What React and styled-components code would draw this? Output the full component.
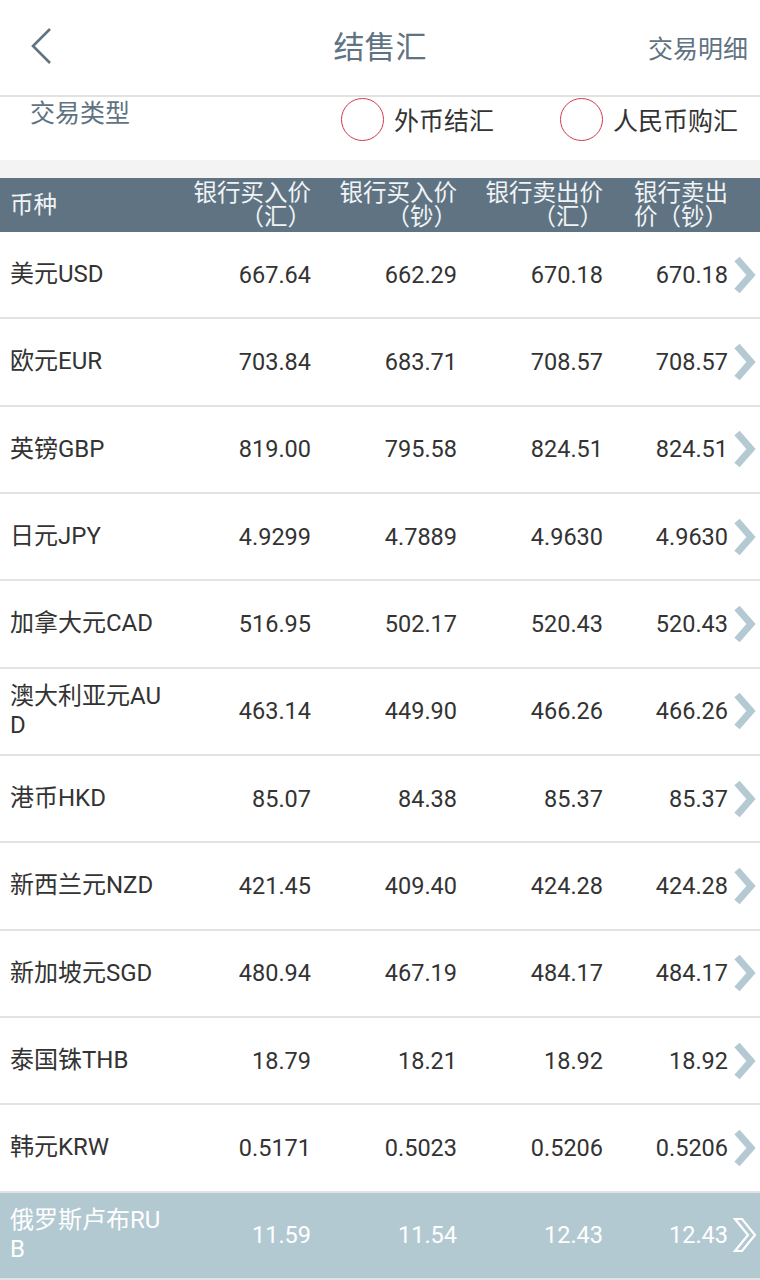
import React from 'react'
import styled, { createGlobalStyle } from 'styled-components'

const GlobalStyle = createGlobalStyle`
  html, body {
    margin: 0;
    padding: 0;
    background: #ffffff;
  }
  body {
    font-family: Roboto, "Noto Sans CJK SC", sans-serif;
  }
`;

const rates = [
  { name: '美元USD', v: ['667.64', '662.29', '670.18', '670.18'] },
  { name: '欧元EUR', v: ['703.84', '683.71', '708.57', '708.57'] },
  { name: '英镑GBP', v: ['819.00', '795.58', '824.51', '824.51'] },
  { name: '日元JPY', v: ['4.9299', '4.7889', '4.9630', '4.9630'] },
  { name: '加拿大元CAD', v: ['516.95', '502.17', '520.43', '520.43'] },
  { name: '澳大利亚元AUD', v: ['463.14', '449.90', '466.26', '466.26'] },
  { name: '港币HKD', v: ['85.07', '84.38', '85.37', '85.37'] },
  { name: '新西兰元NZD', v: ['421.45', '409.40', '424.28', '424.28'] },
  { name: '新加坡元SGD', v: ['480.94', '467.19', '484.17', '484.17'] },
  { name: '泰国铢THB', v: ['18.79', '18.21', '18.92', '18.92'] },
  { name: '韩元KRW', v: ['0.5171', '0.5023', '0.5206', '0.5206'] },
  { name: '俄罗斯卢布RUB', v: ['11.59', '11.54', '12.43', '12.43'], active: true },
];

export default function App() {
  return (
    <Page>
      <GlobalStyle />
      <TopBar>
        <BackButton>
          <svg width="24" height="40" viewBox="0 0 24 40">
            <polyline points="20,3 3,20 20,37" fill="none" stroke="#5f7383" strokeWidth="2.6" />
          </svg>
        </BackButton>
        <Title>结售汇</Title>
        <TopLink>交易明细</TopLink>
      </TopBar>

      <TypeRow>
        <TypeLabel>交易类型</TypeLabel>
        <Options>
          <Option>
            <Radio />
            <span>外币结汇</span>
          </Option>
          <Option>
            <Radio />
            <span>人民币购汇</span>
          </Option>
        </Options>
      </TypeRow>

      <Gap />

      <HeadRow>
        <HeadCell $left>币种</HeadCell>
        <HeadCell>银行买入价（汇）</HeadCell>
        <HeadCell>银行买入价（钞）</HeadCell>
        <HeadCell>银行卖出价（汇）</HeadCell>
        <HeadCell $narrow>银行卖出价（钞）</HeadCell>
        <span />
      </HeadRow>

      {rates.map((r) => (
        <Row key={r.name} $active={r.active}>
          <Name>{r.name}</Name>
          {r.v.map((x, i) => (
            <Num key={i}>{x}</Num>
          ))}
          <Arrow>
            {r.active ? (
              <svg width="26" height="38" viewBox="0 0 26 38">
                <polygon
                  points="3,3 10,3 23,19 10,35 3,35 16,19"
                  fill="none"
                  stroke="#ffffff"
                  strokeWidth="2.2"
                  strokeLinejoin="miter"
                />
              </svg>
            ) : (
              <svg width="26" height="38" viewBox="0 0 26 38">
                <polyline points="5,3 19,19 5,35" fill="none" stroke="#b4c9d2" strokeWidth="7" />
              </svg>
            )}
          </Arrow>
        </Row>
      ))}
    </Page>
  )
}

const Page = styled.div`
  width: 760px;
  height: 1280px;
  overflow: hidden;
  background: #ffffff;
`;

const TopBar = styled.div`
  height: 95px;
  display: grid;
  grid-template-columns: 1fr auto 1fr;
  align-items: center;
  border-bottom: 2px solid #e2e2e2;
  padding: 0 12px;
`;

const BackButton = styled.div`
  display: flex;
  align-items: center;
  padding: 0 0 4px 18px;
`;

const Title = styled.div`
  font-size: 31px;
  color: #5f7383;
  padding-bottom: 6px;
`;

const TopLink = styled.div`
  justify-self: end;
  font-size: 25px;
  color: #5f7383;
  padding-bottom: 2px;
`;

const TypeRow = styled.div`
  height: 63px;
  display: flex;
  justify-content: space-between;
  align-items: flex-start;
  padding: 0 22px 0 30px;
`;

const TypeLabel = styled.div`
  font-size: 25px;
  color: #5f7383;
  line-height: 34px;
`;

const Options = styled.div`
  display: flex;
  gap: 66px;
`;

const Option = styled.div`
  display: flex;
  align-items: center;
  gap: 10px;
  font-size: 25px;
  color: #333333;
  height: 44px;
`;

const Radio = styled.span`
  width: 43px;
  height: 43px;
  border-radius: 50%;
  border: 1.5px solid #d23a4e;
  box-sizing: border-box;
`;

const Gap = styled.div`
  height: 18px;
  background: #f3f3f3;
`;

const gridCols = `165px 146px 146px 146px 125px 32px`;

const HeadRow = styled.div`
  height: 54px;
  display: grid;
  grid-template-columns: ${gridCols};
  align-items: center;
  background: #5f7383;
  color: #f1f4f6;
  font-size: 23.5px;
  line-height: 24px;
`;

const HeadCell = styled.div`
  text-align: ${(p) => (p.$left ? 'left' : 'right')};
  padding-left: ${(p) => (p.$left ? '10px' : p.$narrow ? '24px' : '0')};
`;

const Row = styled.div`
  height: 87.33px;
  box-sizing: border-box;
  display: grid;
  grid-template-columns: ${gridCols};
  align-items: center;
  border-bottom: 2px solid #e3e3e3;
  background: ${(p) => (p.$active ? '#b3c9d2' : '#ffffff')};
  color: ${(p) => (p.$active ? '#ffffff' : '#333333')};
  font-size: 23.5px;
`;

const Name = styled.div`
  padding-left: 10px;
  font-size: 24px;
  line-height: 29px;
  word-break: break-all;
`;

const Num = styled.div`
  text-align: right;
`;

const Arrow = styled.div`
  display: flex;
  align-items: center;
  justify-content: flex-end;
  padding-right: 2px;
`;
